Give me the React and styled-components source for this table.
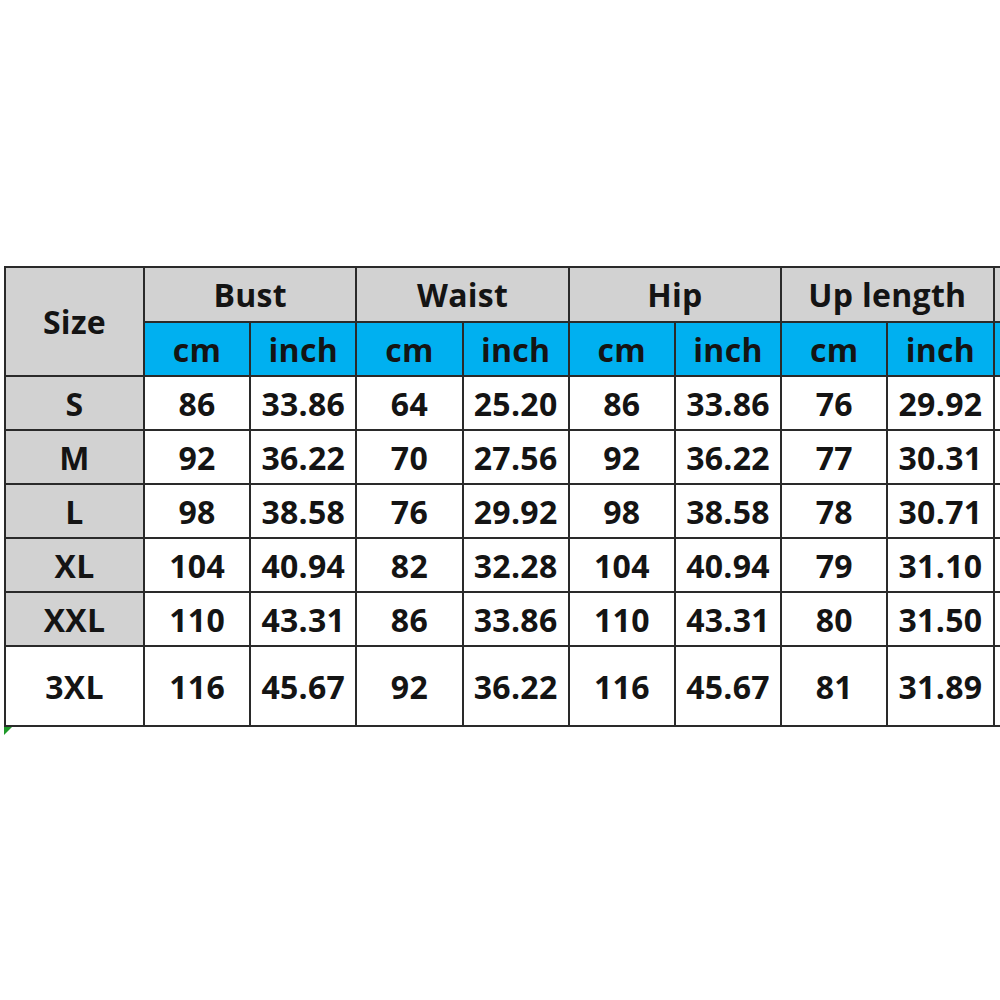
import React from 'react';
import styled, { createGlobalStyle } from 'styled-components';

const GlobalStyle = createGlobalStyle`
  html, body {
    margin: 0;
    padding: 0;
    background: #ffffff;
  }
  body {
    font-family: "Open Sans", "Liberation Sans", sans-serif;
  }
`

const Page = styled.div`
  width: 1000px;
  height: 1000px;
  overflow: hidden;
  padding: 266px 0 0 4px;
  box-sizing: border-box;
  position: relative;
`

const Table = styled.table`
  border-collapse: collapse;
  table-layout: fixed;
  width: 1100px;
  color: #141414;
  font-weight: 700;
  font-size: 32px;
  letter-spacing: 0.3px;
`

const Cell = styled.td`
  border: 2px solid #2a2a2a;
  padding: 0;
  text-align: center;
  vertical-align: middle;
  white-space: nowrap;
  overflow: visible;
  height: ${({h}) => h || 52}px;
  background: ${({bg}) => bg || '#ffffff'};
`

const Corner = styled.div`
  position: absolute;
  left: 4px;
  top: 727px;
  width: 0;
  height: 0;
  border-top: 8px solid #1f9a2a;
  border-right: 8px solid transparent;
`

const GREY = '#d2d2d2'
const BLUE = '#00b0f0'

const groups = ['Bust', 'Waist', 'Hip', 'Up length']

const rows = [
  ['S', '86', '33.86', '64', '25.20', '86', '33.86', '76', '29.92'],
  ['M', '92', '36.22', '70', '27.56', '92', '36.22', '77', '30.31'],
  ['L', '98', '38.58', '76', '29.92', '98', '38.58', '78', '30.71'],
  ['XL', '104', '40.94', '82', '32.28', '104', '40.94', '79', '31.10'],
  ['XXL', '110', '43.31', '86', '33.86', '110', '43.31', '80', '31.50'],
  ['3XL', '116', '45.67', '92', '36.22', '116', '45.67', '81', '31.89'],
]

const App = () => {
  return (
    <Page>
      <GlobalStyle />
      <Table>
        <colgroup>
          <col style={{width: 139}} />
          {Array.from({length: 8}).map((_, i) => <col key={i} style={{width: 106.2}} />)}
          <col style={{width: 111}} />
        </colgroup>
        <tbody>
          <tr>
            <Cell rowSpan={2} bg={GREY}>Size</Cell>
            {groups.map(g => <Cell key={g} colSpan={2} bg={GREY} h={53}>{g}</Cell>)}
            <Cell bg={GREY} h={53}></Cell>
          </tr>
          <tr>
            {groups.map(g => (
              <React.Fragment key={g}>
                <Cell bg={BLUE}>cm</Cell>
                <Cell bg={BLUE}>inch</Cell>
              </React.Fragment>
            ))}
            <Cell bg={BLUE}></Cell>
          </tr>
          {rows.map((r, i) => {
            const last = i === rows.length - 1
            return (
              <tr key={r[0]}>
                <Cell bg={last ? '#ffffff' : GREY} h={last ? 78 : 52}>{r[0]}</Cell>
                {r.slice(1).map((v, j) => <Cell key={j} h={last ? 78 : 52}>{v}</Cell>)}
                <Cell h={last ? 78 : 52}></Cell>
              </tr>
            )
          })}
        </tbody>
      </Table>
      <Corner />
    </Page>
  )
}

export default App
